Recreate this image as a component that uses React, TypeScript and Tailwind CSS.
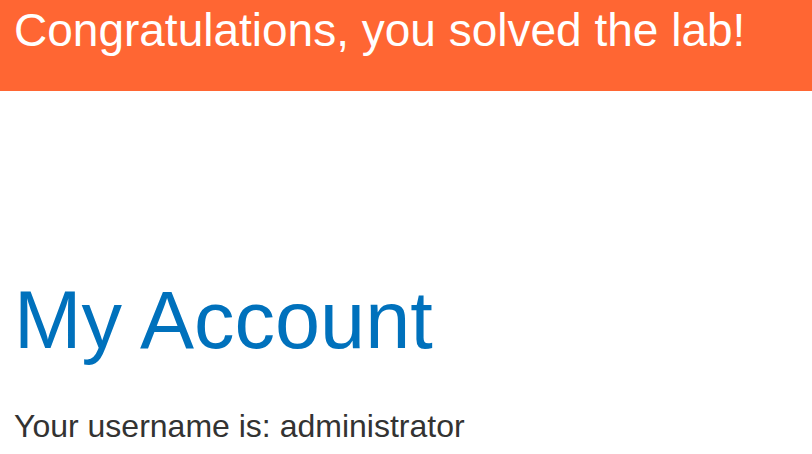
export default function App() {
  return (
    <div className="min-h-[454px] bg-white" style={{ fontFamily: '"Liberation Sans", Arial, sans-serif' }}>
      <div className="h-[91px] bg-[#ff6633] pl-[14px] pt-[4px]">
        <h4 className="text-[46px] leading-[52px] text-white">Congratulations, you solved the lab!</h4>
      </div>
      <div className="px-[14px]">
        <h1 className="mt-[184px] text-[81px] leading-[90px] text-[#0071bc]">My Account</h1>
        <p className="mt-[43px] text-[32px] leading-[36px] text-[#333332]">Your username is: administrator</p>
      </div>
    </div>
  );
}
